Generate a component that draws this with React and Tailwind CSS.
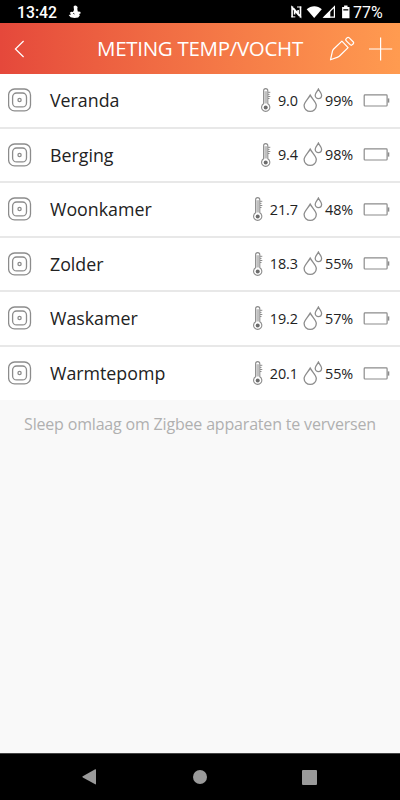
const sensors = [
  { id: 1, name: "Veranda", temp: "9.0", humidity: "99%" },
  { id: 2, name: "Berging", temp: "9.4", humidity: "98%" },
  { id: 3, name: "Woonkamer", temp: "21.7", humidity: "48%" },
  { id: 4, name: "Zolder", temp: "18.3", humidity: "55%" },
  { id: 5, name: "Waskamer", temp: "19.2", humidity: "57%" },
  { id: 6, name: "Warmtepomp", temp: "20.1", humidity: "55%" },
];

function SensorIcon() {
  return (
    <svg width="24" height="24" viewBox="0 0 24 24" fill="none" stroke="#8c8c8c" strokeWidth="1.3">
      <rect x="0.6" y="1" width="21.9" height="21.9" rx="6" />
      <rect x="4.6" y="5" width="13.9" height="13.9" rx="4" />
      <circle cx="11.55" cy="11.95" r="1.6" />
    </svg>
  );
}

function ThermometerIcon() {
  return (
    <svg width="12" height="24" viewBox="0 0 12 24" fill="none" stroke="#8c8c8c" strokeWidth="1.1">
      <path d="M2.6 15.8V2.7a2.1 2.1 0 0 1 4.2 0v13.1a4.1 4.1 0 1 1-4.2 0z" fill="#fff" />
      <path d="M4.7 3.2v12.3" stroke="#c0c0c0" strokeWidth="2.8" />
      <circle cx="4.7" cy="19.4" r="2" fill="#6c6c6c" stroke="none" />
      <path d="M7 4.3h2.3M7 6.4h1.5M7 8.5h2.3M7 10.5h1.5" strokeWidth="1" />
    </svg>
  );
}

function DropsIcon() {
  return (
    <svg width="20" height="25" viewBox="0 0 20 25" fill="none" stroke="#8c8c8c" strokeWidth="1.3">
      <path d="M7.2 7.1C5.4 10.6 1.1 14.2 1.1 17.5a6.1 5.9 0 0 0 12.2 0C13.3 14.2 9 10.6 7.2 7.1z" />
      <path d="M15.4 1.1c-1 2.1-3.2 3.9-3.2 6.1a3.2 3.4 0 0 0 6.4 0c0-2.2-2.2-4-3.2-6.1z" />
    </svg>
  );
}

function BatteryIcon() {
  return (
    <svg width="27" height="13" viewBox="0 0 27 13" fill="none" stroke="#8c8c8c" strokeWidth="1.2">
      <rect x="1.2" y="0.9" width="22.9" height="11.1" rx="0.8" />
      <path d="M25.5 4.4v4.2" strokeWidth="1.6" />
    </svg>
  );
}

function StatusBar() {
  return (
    <div className="flex h-[23px] shrink-0 items-center bg-black pl-[17px] pr-[17px] font-[Roboto] text-white">
      <span className="mt-[3px] w-[41px] text-[15.8px] leading-none font-medium">13:42</span>
      <svg className="ml-[10px] mt-[1px]" width="13" height="14" viewBox="0 0 13 14" fill="#fff">
        <path d="M5.6 1.6Q6.6 0 8.2.7L9.6 1.9 9.3 4l.5 2.4 2.4.4.6 1.5-1.6.8.6 1.4-1.6 2-3.7.6-3.9-.9L.7 9.9l2.3-.5-1.2-1.6L3.4 6.8l1.6.3 1-2z" />
        <path d="M5 8.2l1.6.9" stroke="#000" strokeWidth="0.7" />
      </svg>
      {/* NFC, wifi, signal, battery */}
      <svg className="ml-auto" width="60" height="14" viewBox="0 0 60 14" fill="none">
        <path d="M2.1 12.3V2.4l6 7V5M10.5 1.6v9.8L4.6 4.6v5" stroke="#fff" strokeWidth="1.6" />
        <path d="M1.3 2h2M9.4 11.9h1.9M7 2h4.3M1.3 11.9h4" stroke="#fff" strokeWidth="1" />
        <path d="M16.7 4.2C21 .3 27.6.3 31.8 4.2L24.2 13z" fill="#fff" />
        <path d="M34 12.2L44.4 1.8v10.4z" stroke="#fff" strokeWidth="1.2" />
        <path d="M33 12.8L40.3 5.5v7.3z" fill="#fff" />
        <path d="M54.1.6h3.4v1.4h2v11.2h-7.4V2h2z" fill="#fff" />
        <path d="M53.3 4h5v1.6h-5z" fill="#333" />
      </svg>
      <span className="ml-[3px] mt-[3px] w-[30px] text-[16px] leading-none">77%</span>
    </div>
  );
}

function Header() {
  return (
    <header className="flex h-[51px] shrink-0 items-center bg-linear-to-r from-[#e5483b] to-[#ff9b50] text-white">
      <button className="flex h-full w-[90px] items-center pl-[14px]">
        <svg width="11" height="18" viewBox="0 0 11 18" fill="none" stroke="#fff" strokeWidth="1.2">
          <path d="M9.6 1L1.4 9l8.2 8" />
        </svg>
      </button>
      <h1 className="w-[220px] text-center text-[20.5px] leading-none tracking-[-0.3px] whitespace-nowrap">
        METING TEMP/VOCHT
      </h1>
      <button className="ml-[19px]">
        <svg width="26" height="26" viewBox="0 0 26 26" fill="none" stroke="#fff" strokeWidth="1.2" strokeLinejoin="round">
          <path d="M1.5 23.8L3.4 15.3Q3.7 14 4.7 13L12.9 5.1l6.2 6.5-8.3 8.2q-.9.9-2 1.3z" />
          <rect x="16.4" y="3.2" width="8.6" height="4.2" rx="1.6" transform="rotate(45 20.7 5.3)" />
        </svg>
      </button>
      <button className="ml-[13px]">
        <svg width="26" height="26" viewBox="0 0 26 26" fill="none" stroke="#fff" strokeWidth="1.2">
          <path d="M12.6 1.4v23.2M1 13h23.2" />
        </svg>
      </button>
    </header>
  );
}

function SensorRow({ sensor }) {
  return (
    <li className="flex h-[54.5px] items-center border-b-2 border-[#e8e8e8] bg-white pl-[8px] pr-[10px] text-[#222] last:h-[53.5px] last:border-0">
      <SensorIcon />
      <span className="ml-[18px] mt-[2px] text-[17.8px] leading-none">{sensor.name}</span>
      <div className="ml-auto flex items-center text-[14.4px] leading-none tracking-[-0.05px]">
        <ThermometerIcon />
        <span className="ml-[4.5px] mt-px">{sensor.temp}</span>
        <span className="ml-[5px]">
          <DropsIcon />
        </span>
        <span className="ml-[2px] mt-px w-[38px]">{sensor.humidity}</span>
        <BatteryIcon />
      </div>
    </li>
  );
}

function NavBar() {
  return (
    <nav className="flex h-[47px] shrink-0 items-center justify-between border-t border-[#444] bg-black pl-[82px] pr-[83px]">
      <svg width="15" height="16" viewBox="0 0 15 16" fill="#9a9a9a">
        <path d="M.8 7.2L13.2.3q.8-.4.8.5v14q0 .9-.8.5L.8 8.4q-.9-.6 0-1.2z" />
      </svg>
      <div className="h-[14px] w-[14px] rounded-full bg-[#9a9a9a]" />
      <div className="h-[15px] w-[15px] rounded-[1px] bg-[#9a9a9a]" />
    </nav>
  );
}

export default function App() {
  return (
    <div className="flex h-screen w-full flex-col overflow-hidden bg-[#f9f9f9] font-['Open_Sans',sans-serif]">
      <StatusBar />
      <Header />
      <main className="flex-1">
        <ul>
          {sensors.map((sensor) => (
            <SensorRow key={sensor.id} sensor={sensor} />
          ))}
        </ul>
        <p className="mt-[16px] text-center text-[16px] leading-none tracking-[-0.18px] whitespace-nowrap text-[#b0b0b0]">
          Sleep omlaag om Zigbee apparaten te verversen
        </p>
      </main>
      <NavBar />
    </div>
  );
}
